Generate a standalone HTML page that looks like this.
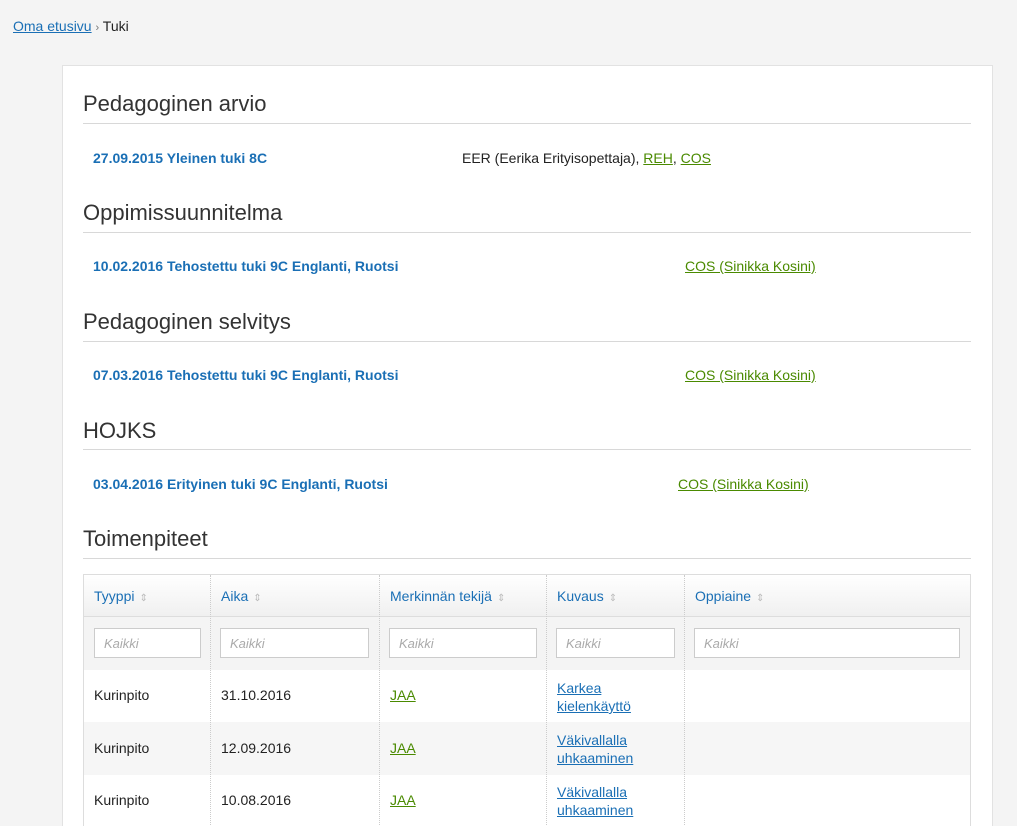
<!DOCTYPE html>
<html style="height:826px;overflow:hidden"><head><meta charset="utf-8"><style>
body{margin:0;width:1017px;height:826px;background:#f4f4f4;font-family:"Liberation Sans",sans-serif;font-size:14px;color:#222;position:relative;overflow:hidden}
.a{position:absolute;white-space:nowrap}
a{color:#1a6fb5;text-decoration:underline}
.g{color:#4a8a00;text-decoration:underline}
.panel{position:absolute;left:62px;top:65px;width:929px;height:761px;background:#fff;border:1px solid #e2e2e2;border-bottom:0}
h2{position:absolute;left:83px;margin:0;font-weight:normal;font-size:22px;color:#333}
.hr{position:absolute;left:83px;width:888px;height:1px;background:#d8d8d8}
.b{color:#1a6fb5;font-weight:bold;font-size:14px}
.tbl{position:absolute;left:83px;top:574px;width:886px;height:252px;border:1px solid #ddd;border-bottom:0;background:#fff;overflow:hidden}
.hd{position:absolute;left:0;top:0;width:886px;height:41px;background:linear-gradient(#fff,#f0f0f0);border-bottom:1px solid #ddd}
.fr{position:absolute;left:0;top:42px;width:886px;height:53px;background:#f4f4f4}
.r2{position:absolute;left:0;top:147px;width:886px;height:53px;background:#f6f6f6}
.vl{position:absolute;top:0;width:0;height:260px;border-left:1px dotted #ccc}
.th{position:absolute;top:13px;color:#1a6fb5;font-size:14px}
.th span{color:#bbb;font-size:10px;margin-left:5px}
.in{position:absolute;top:53px;height:30px;border:1px solid #ccc;background:#fff;box-sizing:border-box;font-style:italic;color:#aaa;font-size:13px;padding:7px 0 0 9px}
.td{position:absolute;font-size:14px}
</style></head><body>
<div class="a" style="left:13px;top:18px"><a>Oma etusivu</a> <span style="color:#777;font-size:11px">›</span> Tuki</div>
<div class="panel"></div>
<h2 style="top:91px">Pedagoginen arvio</h2><div class="hr" style="top:123px"></div>
<div class="a b" style="left:93px;top:150px">27.09.2015 Yleinen tuki 8C</div>
<div class="a" style="left:462px;top:150px">EER (Eerika Erityisopettaja), <span class="g">REH</span>, <span class="g">COS</span></div>
<h2 style="top:200px">Oppimissuunnitelma</h2><div class="hr" style="top:232px"></div>
<div class="a b" style="left:93px;top:258px">10.02.2016 Tehostettu tuki 9C Englanti, Ruotsi</div>
<div class="a g" style="left:685px;top:258px">COS (Sinikka Kosini)</div>
<h2 style="top:309px">Pedagoginen selvitys</h2><div class="hr" style="top:341px"></div>
<div class="a b" style="left:93px;top:367px">07.03.2016 Tehostettu tuki 9C Englanti, Ruotsi</div>
<div class="a g" style="left:685px;top:367px">COS (Sinikka Kosini)</div>
<h2 style="top:418px">HOJKS</h2><div class="hr" style="top:449px"></div>
<div class="a b" style="left:93px;top:476px">03.04.2016 Erityinen tuki 9C Englanti, Ruotsi</div>
<div class="a g" style="left:678px;top:476px">COS (Sinikka Kosini)</div>
<h2 style="top:526px">Toimenpiteet</h2><div class="hr" style="top:558px"></div>
<div class="tbl">
<div class="hd"></div><div class="fr"></div><div class="r2"></div>
<div class="vl" style="left:126px"></div><div class="vl" style="left:295px"></div><div class="vl" style="left:462px"></div><div class="vl" style="left:600px"></div>
<div class="th" style="left:10px">Tyyppi<span>⇕</span></div>
<div class="th" style="left:137px">Aika<span>⇕</span></div>
<div class="th" style="left:306px">Merkinnän tekijä<span>⇕</span></div>
<div class="th" style="left:473px">Kuvaus<span>⇕</span></div>
<div class="th" style="left:611px">Oppiaine<span>⇕</span></div>
<div class="in" style="left:10px;width:107px">Kaikki</div>
<div class="in" style="left:136px;width:149px">Kaikki</div>
<div class="in" style="left:305px;width:148px">Kaikki</div>
<div class="in" style="left:472px;width:119px">Kaikki</div>
<div class="in" style="left:610px;width:266px">Kaikki</div>
<div class="td" style="left:10px;top:112px">Kurinpito</div><div class="td" style="left:137px;top:112px">31.10.2016</div><div class="td g" style="left:306px;top:112px">JAA</div><div class="td" style="left:473px;top:104px;line-height:18px"><a>Karkea<br>kielenkäyttö</a></div>
<div class="td" style="left:10px;top:165px">Kurinpito</div><div class="td" style="left:137px;top:165px">12.09.2016</div><div class="td g" style="left:306px;top:165px">JAA</div><div class="td" style="left:473px;top:156px;line-height:18px"><a>Väkivallalla<br>uhkaaminen</a></div>
<div class="td" style="left:10px;top:217px">Kurinpito</div><div class="td" style="left:137px;top:217px">10.08.2016</div><div class="td g" style="left:306px;top:217px">JAA</div><div class="td" style="left:473px;top:208px;line-height:18px"><a>Väkivallalla<br>uhkaaminen</a></div>
</div>
</body></html>
